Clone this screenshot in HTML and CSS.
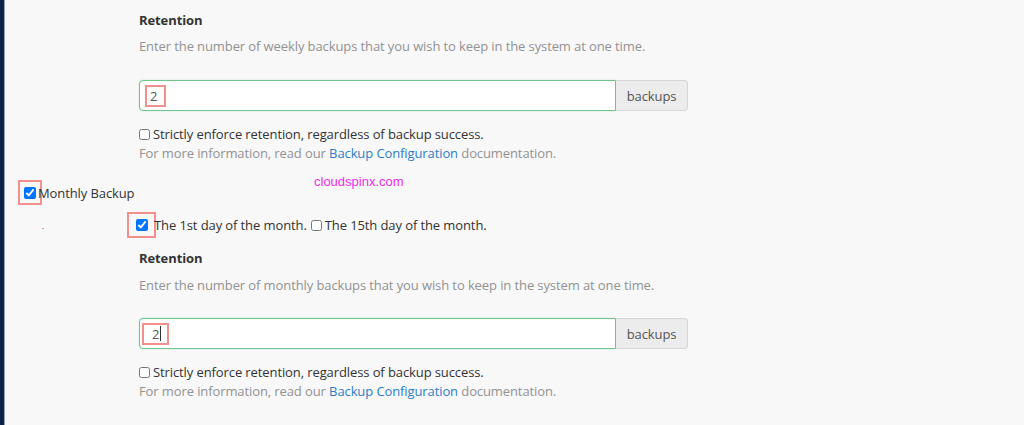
FILE: index.html
```html
<!DOCTYPE html>
<html>
<head>
<meta charset="utf-8">
<link rel="stylesheet" href="styles.css">
</head>
<body>
<div class="page">
  <div class="strip"></div>
  <main class="content">
    <div class="indent">
      <div class="label">Retention</div>
      <div class="help">Enter the number of weekly backups that you wish to keep in the system at one time.</div>
      <div class="group">
        <div class="field"><span class="mark mark-val">2</span></div>
        <div class="addon">backups</div>
      </div>
      <div class="check-row"><input type="checkbox"> Strictly enforce retention, regardless of backup success.</div>
      <div class="help info">For more information, read our <a href="#">Backup Configuration</a> documentation.</div>
    </div>

    <div class="monthly"><span class="mark mark-cb"><input type="checkbox" checked></span>Monthly Backup</div>

    <div class="indent">
      <div class="days"><span class="mark mark-cb2"><input type="checkbox" checked></span>The 1st day of the month. <input type="checkbox" class="cb15"> The 15th day of the month.</div>
      <div class="label label2">Retention</div>
      <div class="help help2">Enter the number of monthly backups that you wish to keep in the system at one time.</div>
      <div class="group group2">
        <div class="field"><span class="mark mark-val2">2<span class="caret"></span></span></div>
        <div class="addon">backups</div>
      </div>
      <div class="check-row"><input type="checkbox"> Strictly enforce retention, regardless of backup success.</div>
      <div class="help info">For more information, read our <a href="#">Backup Configuration</a> documentation.</div>
    </div>
    <div class="watermark">cloudspinx.com</div>
    <div class="dot"></div>
  </main>
</div>
</body>
</html>
```

FILE: styles.css
```css
html, body {
  margin: 0;
  padding: 0;
  background: #f8f8f8;
  height: 100%;
}
body {
  font-family: "Open Sans", "Noto Sans", sans-serif;
  font-size: 13px;
  letter-spacing: -0.1px;
  color: #333;
  overflow: hidden;
}
.page {
  display: flex;
  min-height: 425px;
}
.strip {
  width: 4px;
  background: #0c2148;
  border-right: 1px solid #9aa7c2;
  flex: none;
}
.content {
  position: relative;
  flex: 1;
  padding-left: 18px;
}
.indent {
  margin-left: 116px;
}
.label {
  font-weight: 700;
  line-height: 20px;
  margin-top: 10px;
}
.help {
  color: #929292;
  line-height: 20px;
  margin-top: 6px;
}
.group {
  display: flex;
  margin-top: 24px;
  height: 31px;
}
.field {
  width: 470px;
  border: 1px solid #6cc58f;
  border-radius: 4px 0 0 4px;
  background: #fff;
  display: flex;
  align-items: center;
  padding-left: 5px;
  box-shadow: 0 0 2px rgba(108,197,143,.35);
}
.addon {
  width: 71px;
  border: 1px solid #d6d6d6;
  border-left: none;
  border-radius: 0 4px 4px 0;
  background: #ececec;
  color: #555;
  display: flex;
  align-items: center;
  justify-content: center;
}
.mark {
  border: 2px solid #f4908c;
  display: inline-flex;
  align-items: center;
}
.mark-val {
  box-sizing: border-box;
  padding-left: 3px;
  width: 21px;
  height: 22px;
  color: #555;
}
.mark-val2 {
  box-sizing: border-box;
  width: 27px;
  height: 22px;
  padding-left: 8px;
  margin-left: -3px;
  color: #555;
}
.caret {
  display: inline-block;
  width: 1px;
  height: 15px;
  background: #333;
  margin-left: 1px;
}
.check-row {
  height: 20px;
  line-height: 20px;
  margin-top: 13px;
  display: flex;
  align-items: center;
}
.check-row input {
  margin: 0 3px 0 0;
  width: 11px;
  height: 11px;
}
.info {
  margin-top: -1px;
}
.info a {
  color: #2d7cc6;
  text-decoration: none;
}
.monthly {
  display: flex;
  align-items: center;
  line-height: 20px;
  margin-top: 17px;
}
.mark-cb {
  width: 24px;
  height: 25px;
  box-sizing: border-box;
  justify-content: center;
  margin-left: -5px;
  margin-right: -4px;
}
.mark-cb input, .mark-cb2 input {
  margin: 0;
  width: 12px;
  height: 12px;
}
.days {
  display: flex;
  align-items: center;
  line-height: 20px;
  margin-top: 7px;
  margin-left: -12px;
}
.mark-cb2 {
  width: 29px;
  height: 26px;
  box-sizing: border-box;
  justify-content: center;
  margin-right: -2px;
}
.cb15 {
  margin: 0 3px 0 4px;
  width: 11px;
  height: 11px;
}
.label2 {
  margin-top: 10px;
}
.help2 {
  margin-top: 7px;
}
.group2 {
  margin-top: 23px;
}
.watermark {
  position: absolute;
  left: 309px;
  top: 174px;
  font-family: "Liberation Sans", Arial, sans-serif;
  font-size: 13px;
  letter-spacing: 0;
  color: #f02cf0;
}
.dot {
  position: absolute;
  left: 37px;
  top: 228px;
  width: 2px;
  height: 1px;
  background: #f4a09c;
}
```
